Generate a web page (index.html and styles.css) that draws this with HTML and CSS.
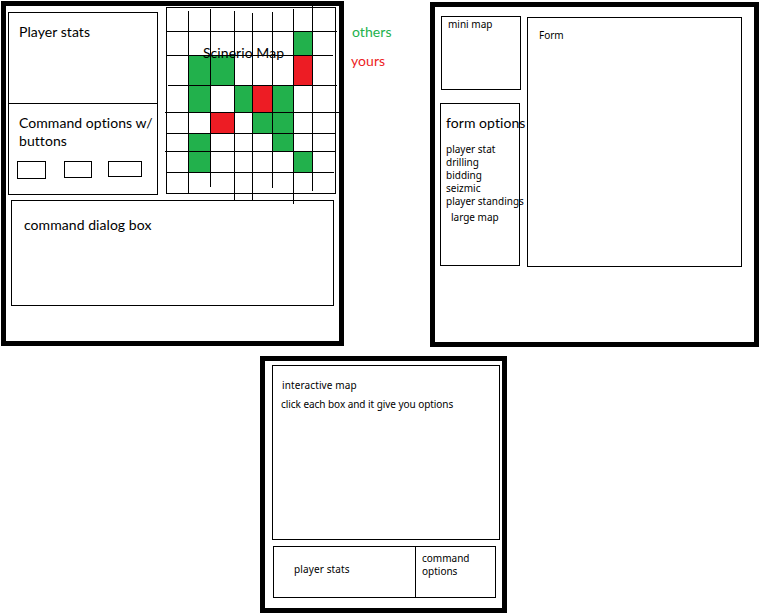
FILE: index.html
```html
<!DOCTYPE html>
<html lang="en">
<head>
<meta charset="utf-8">
<title>Game screens wireframe</title>
<link rel="stylesheet" href="styles.css">
</head>
<body>
<main class="board">
  <div class="top-row">
    <section class="frame main-screen">
      <div class="upper">
        <div class="side">
          <div class="stats"><p class="t">Player stats</p></div>
          <div class="commands">
            <p class="t">Command options w/<br>buttons</p>
            <div class="buttons"><span class="btn b1"></span><span class="btn b2"></span><span class="btn b3"></span></div>
          </div>
        </div>
        <div class="map">
          <svg width="175" height="198" viewBox="165 6 175 198" shape-rendering="crispEdges">
            <g fill="#22b14c">
              <path d="M188 55h46v30h-46zM188 85h22v27h-22zM188 133h22v39h-22zM234 85h18v27h-18zM272 85h21v66h-21zM252 112h20v21h-20zM293 31h19v24h-19zM293 151h19v21h-19z"/>
            </g>
            <g fill="#ed1c24">
              <path d="M293 55h19v30h-19zM252 85h20v27h-20zM210 112h24v21h-24z"/>
            </g>
            <path fill="none" stroke="#000" d="M166.500 7.500h169v186h-169zM188.500 11v183M210.500 9v178M234.500 11v189M252.500 13v187M272.500 12v176M293.500 9v195M312.500 6v185M166 31.500h171M166 55.500h167M168 85.500h169M165 112.500h174M166 133.500h170M165 151.500h171M166 172.500h168"/>
          </svg>
          <p class="t map-title">Scinerio Map</p>
        </div>
      </div>
      <div class="dialog"><p class="t">command dialog box</p></div>
    </section>
    <div class="legend">
      <p class="t others">others</p>
      <p class="t yours">yours</p>
    </div>
    <section class="frame form-screen">
      <div class="form-side">
        <div class="mini"><p class="s">mini map</p></div>
        <div class="options">
          <p class="t">form options</p>
          <ul class="s">
            <li>player stat</li>
            <li>drilling</li>
            <li>bidding</li>
            <li>seizmic</li>
            <li>player standings</li>
            <li class="large">large map</li>
          </ul>
        </div>
      </div>
      <div class="form"><p class="s">Form</p></div>
    </section>
  </div>
  <section class="frame map-screen">
    <div class="interactive">
      <p class="s title">interactive map</p>
      <p class="s click">click each box and it give you options</p>
    </div>
    <div class="footer">
      <p class="s player">player stats</p>
      <p class="s cmd">command<br>options</p>
    </div>
  </section>
</main>
</body>
</html>
```
FILE: styles.css
```css
* { box-sizing: border-box; margin: 0; padding: 0; }
body { background: #fff; color: #000; font-family: Lato, "Liberation Sans", sans-serif; }
.board { width: 768px; height: 614px; overflow: hidden; }
.t { font-size: 14px; line-height: 18px; letter-spacing: 0.06px; font-variant-ligatures: none; white-space: nowrap; }
.s { font-family: "Noto Sans", sans-serif; font-size: 10px; line-height: 13px; white-space: nowrap; list-style: none; }
.frame { border: 5px solid #000; }
.top-row { display: flex; align-items: flex-start; height: 356px; }

.main-screen { width: 343px; height: 345px; margin: 1px 0 0 1px; }
.upper { display: flex; height: 194px; }
.side { flex: none; width: 150px; height: 183px; margin: 6px 0 0 2px; border: 1px solid #000; }
.stats { height: 91px; padding: 10px 0 0 10px; border-bottom: 1px solid #000; }
.commands { padding: 10px 0 0 10px; }
.buttons { display: flex; align-items: flex-start; margin: 11px 0 0 -2px; }
.btn { border: 1px solid #000; }
.b1 { width: 29px; height: 18px; }
.b2 { width: 28px; height: 17px; margin-left: 18px; }
.b3 { width: 34px; height: 16px; margin-left: 16px; }
.map { position: relative; flex: none; width: 175px; height: 198px; margin-left: 7px; }
.map svg { display: block; }
.map-title { position: absolute; left: 38px; top: 38px; }
.dialog { width: 323px; height: 106px; margin-left: 5px; padding: 15px 0 0 12px; border: 1px solid #000; }

.legend { width: 86px; padding: 23px 0 0 8px; }
.others { color: #22b14c; }
.yours { margin: 11px 0 0 -1px; color: #ed1c24; }

.form-screen { display: flex; align-items: flex-start; width: 329px; height: 345px; margin-top: 2px; }
.form-side { width: 81px; margin: 9px 0 0 5px; }
.mini { width: 80px; height: 74px; margin-left: 1px; padding: 1px 0 0 6px; border: 1px solid #000; }
.options { width: 80px; height: 163px; margin-top: 13px; padding: 10px 0 0 5px; border: 1px solid #000; }
.options ul { margin-top: 11px; }
.options .large { margin: 3px 0 0 5px; }
.form { width: 215px; height: 250px; margin: 10px 0 0 6px; padding: 11px 0 0 11px; border: 1px solid #000; }

.map-screen { width: 247px; height: 257px; margin-left: 260px; }
.interactive { width: 228px; height: 175px; margin: 4px 0 0 7px; padding: 13px 0 0 9px; border: 1px solid #000; }
.title { letter-spacing: 0.12px; }
.click { margin: 6px 0 0 -1px; letter-spacing: -0.05px; }
.footer { display: flex; width: 223px; height: 52px; margin: 6px 0 0 8px; border: 1px solid #000; }
.player { width: 142px; padding: 16px 0 0 20px; border-right: 1px solid #000; letter-spacing: 0.12px; }
.cmd { padding: 5px 0 0 6px; }
```
